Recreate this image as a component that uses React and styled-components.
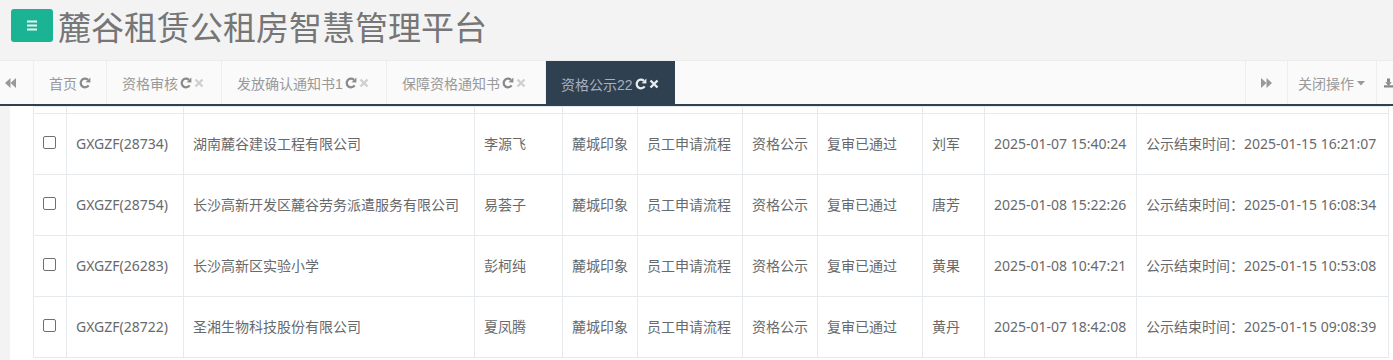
import React from 'react';
import styled, { createGlobalStyle } from 'styled-components';

const GlobalStyle = createGlobalStyle`
    html, body {
        margin: 0;
        padding: 0;
        background: #f3f3f4;
        font-family: "Liberation Sans", "Noto Sans CJK SC", sans-serif;
        color: #676a6c;
        overflow: hidden;
    }
`;

const Header = styled.div`
    height: 60px;
    display: flex;
    align-items: center;
    padding-left: 11px;
    gap: 5px;
    box-sizing: border-box;
`;

const MenuButton = styled.div`
    width: 42px;
    height: 33px;
    margin-top: -10px;
    border-radius: 3px;
    background: #1ab394;
    display: flex;
    align-items: center;
    justify-content: center;
`;

const Title = styled.div`
    font-family: "Noto Sans CJK SC", sans-serif;
    font-size: 33px;
    line-height: 40px;
    margin-top: -9px;
    color: #767676;
`;

const TabBar = styled.div`
    height: 46px;
    box-sizing: border-box;
    display: flex;
    background: #fafafa;
    border-top: 1px solid #ececec;
    border-bottom: 2px solid #2f4050;
`;

const NavButton = styled.div`
    width: ${({ width }) => width}px;
    flex: none;
    display: flex;
    align-items: center;
    justify-content: ${({ align }) => align || 'center'};
    padding-left: ${({ pad }) => pad || 0}px;
    box-sizing: border-box;
    ${({ side }) => side === 'right' && 'border-right: 1px solid #eeeeee;'}
    ${({ side }) => side === 'left' && 'border-left: 1px solid #eeeeee;'}
    color: #999;
    font-size: 14px;
    font-family: "Noto Sans CJK SC", sans-serif;
`;

const Tabs = styled.div`
    flex: 1;
    display: flex;
`;

const Tab = styled.div`
    width: ${({ width }) => width}px;
    flex: none;
    box-sizing: border-box;
    display: flex;
    align-items: center;
    padding-left: 15px;
    gap: 1px;
    font-size: 14px;
    color: ${({ active }) => (active ? '#a7b1c2' : '#999')};
    background: ${({ active }) => (active ? '#2f4050' : 'transparent')};
    border-right: ${({ active }) => (active ? 'none' : '1px solid #eeeeee')};
    margin-bottom: ${({ active }) => (active ? '-2px' : '0')};
    white-space: nowrap;
`;

const Content = styled.div`
    height: 254px;
    overflow: hidden;
    padding-left: 10px;
`;

const Panel = styled.div`
    background: #fff;
    height: 100%;
    padding-left: 23px;
`;

const Table = styled.table`
    border-collapse: collapse;
    table-layout: fixed;
    width: 1355px;
    font-size: 14px;
    color: #676a6c;
`;

const Cell = styled.td`
    border: 1px solid #e7eaec;
    padding: 0 9px 2px;
    height: ${({ h }) => h}px;
    vertical-align: middle;
    white-space: nowrap;
    overflow: hidden;
    font-family: "Noto Sans", "Noto Sans CJK SC", sans-serif;
`;

const Check = styled.input`
    appearance: none;
    display: block;
    width: 13px;
    height: 13px;
    margin: 0 0 2px 0;
    border: 1px solid #707070;
    border-radius: 2px;
    background: #fff;
    box-sizing: border-box;
`;

const Bars = () => (
    <svg width="12" height="11" viewBox="0 0 12 11">
        <rect x="1" y="0.5" width="10" height="2" fill="#e6f7f2" />
        <rect x="1" y="4.5" width="10" height="2" fill="#e6f7f2" />
        <rect x="1" y="8.5" width="10" height="2" fill="#e6f7f2" />
    </svg>
);

const Refresh = ({ color }) => (
    <svg width="12" height="12" viewBox="0 0 12 12" style={{ marginLeft: 1 }}>
        <path d="M9.6 8.4 A4.3 4.3 0 1 1 8.9 2.8" fill="none" stroke={color} strokeWidth="2.3" />
        <polygon points="11.4,0.6 11.4,5.6 6.6,5.2" fill={color} />
    </svg>
);

const Close = ({ color }) => (
    <svg width="10" height="10" viewBox="0 0 10 10" style={{ marginLeft: 1 }}>
        <path d="M1.5 1.5 L8.5 8.5 M8.5 1.5 L1.5 8.5" stroke={color} strokeWidth="2.4" />
    </svg>
);

const Backward = () => (
    <svg width="11" height="10" viewBox="0 0 11 10">
        <polygon points="5.5,0 0,5 5.5,10" fill="#999" />
        <polygon points="11,0 5.5,5 11,10" fill="#999" />
    </svg>
);

const Forward = () => (
    <svg width="11" height="10" viewBox="0 0 11 10">
        <polygon points="0,0 5.5,5 0,10" fill="#999" />
        <polygon points="5.5,0 11,5 5.5,10" fill="#999" />
    </svg>
);

const Caret = () => (
    <svg width="8" height="5" viewBox="0 0 8 5" style={{ marginLeft: 3, marginTop: 2 }}>
        <polygon points="0,0 8,0 4,4.5" fill="#999" />
    </svg>
);

const Download = () => (
    <svg width="12" height="12" viewBox="0 0 12 12">
        <rect x="4" y="0" width="4" height="5" fill="#888" />
        <polygon points="1.5,5 10.5,5 6,9.5" fill="#888" />
        <rect x="0" y="9" width="12" height="3" fill="#888" />
    </svg>
);

const tabs = [
    { label: '首页', width: 73 },
    { label: '资格审核', close: true, width: 115 },
    { label: '发放确认通知书1', close: true, width: 165 },
    { label: '保障资格通知书', close: true, width: 159 },
    { label: '资格公示22', close: true, active: true, width: 129 },
];

const widths = [33, 117, 291, 88, 75, 105, 75, 105, 62, 152, 252];

const rows = [
    ['GXGZF(28734)', '湖南麓谷建设工程有限公司', '李源飞', '刘军', '2025-01-07 15:40:24', '2025-01-15 16:21:07'],
    ['GXGZF(28754)', '长沙高新开发区麓谷劳务派遣服务有限公司', '易荟子', '唐芳', '2025-01-08 15:22:26', '2025-01-15 16:08:34'],
    ['GXGZF(26283)', '长沙高新区实验小学', '彭柯纯', '黄果', '2025-01-08 10:47:21', '2025-01-15 10:53:08'],
    ['GXGZF(28722)', '圣湘生物科技股份有限公司', '夏凤腾', '黄丹', '2025-01-07 18:42:08', '2025-01-15 09:08:39'],
];

const App = () => (
    <>
        <GlobalStyle />
        <Header>
            <MenuButton>
                <Bars />
            </MenuButton>
            <Title>麓谷租赁公租房智慧管理平台</Title>
        </Header>
        <TabBar>
            <NavButton width={34} side="right" align="flex-start" pad={5}>
                <Backward />
            </NavButton>
            <Tabs>
                {tabs.map((t) => (
                    <Tab key={t.label} active={t.active} width={t.width}>
                        {t.label}
                        <Refresh color={t.active ? '#e8ecf1' : '#8a8a8a'} />
                        {t.close && <Close color={t.active ? '#e8ecf1' : '#cfcfcf'} />}
                    </Tab>
                ))}
            </Tabs>
            <NavButton width={42} side="left">
                <Forward />
            </NavButton>
            <NavButton width={89} side="left" align="flex-start" pad={10}>
                关闭操作
                <Caret />
            </NavButton>
            <NavButton width={17} side="left" align="flex-start" pad={7}>
                <Download />
            </NavButton>
        </TabBar>
        <Content>
            <Panel>
                <Table>
                    <colgroup>
                        {widths.map((w, i) => (
                            <col key={i} style={{ width: w }} />
                        ))}
                    </colgroup>
                    <tbody>
                        <tr>
                            {widths.map((w, i) => (
                                <Cell key={i} h={4} />
                            ))}
                        </tr>
                        {rows.map((r) => (
                            <tr key={r[0]}>
                                <Cell h={58}>
                                    <Check type="checkbox" />
                                </Cell>
                                <Cell h={58}>{r[0]}</Cell>
                                <Cell h={58}>{r[1]}</Cell>
                                <Cell h={58}>{r[2]}</Cell>
                                <Cell h={58}>麓城印象</Cell>
                                <Cell h={58}>员工申请流程</Cell>
                                <Cell h={58}>资格公示</Cell>
                                <Cell h={58}>复审已通过</Cell>
                                <Cell h={58}>{r[3]}</Cell>
                                <Cell h={58}>{r[4]}</Cell>
                                <Cell h={58}>公示结束时间：{r[5]}</Cell>
                            </tr>
                        ))}
                    </tbody>
                </Table>
            </Panel>
        </Content>
    </>
);

export default App;
